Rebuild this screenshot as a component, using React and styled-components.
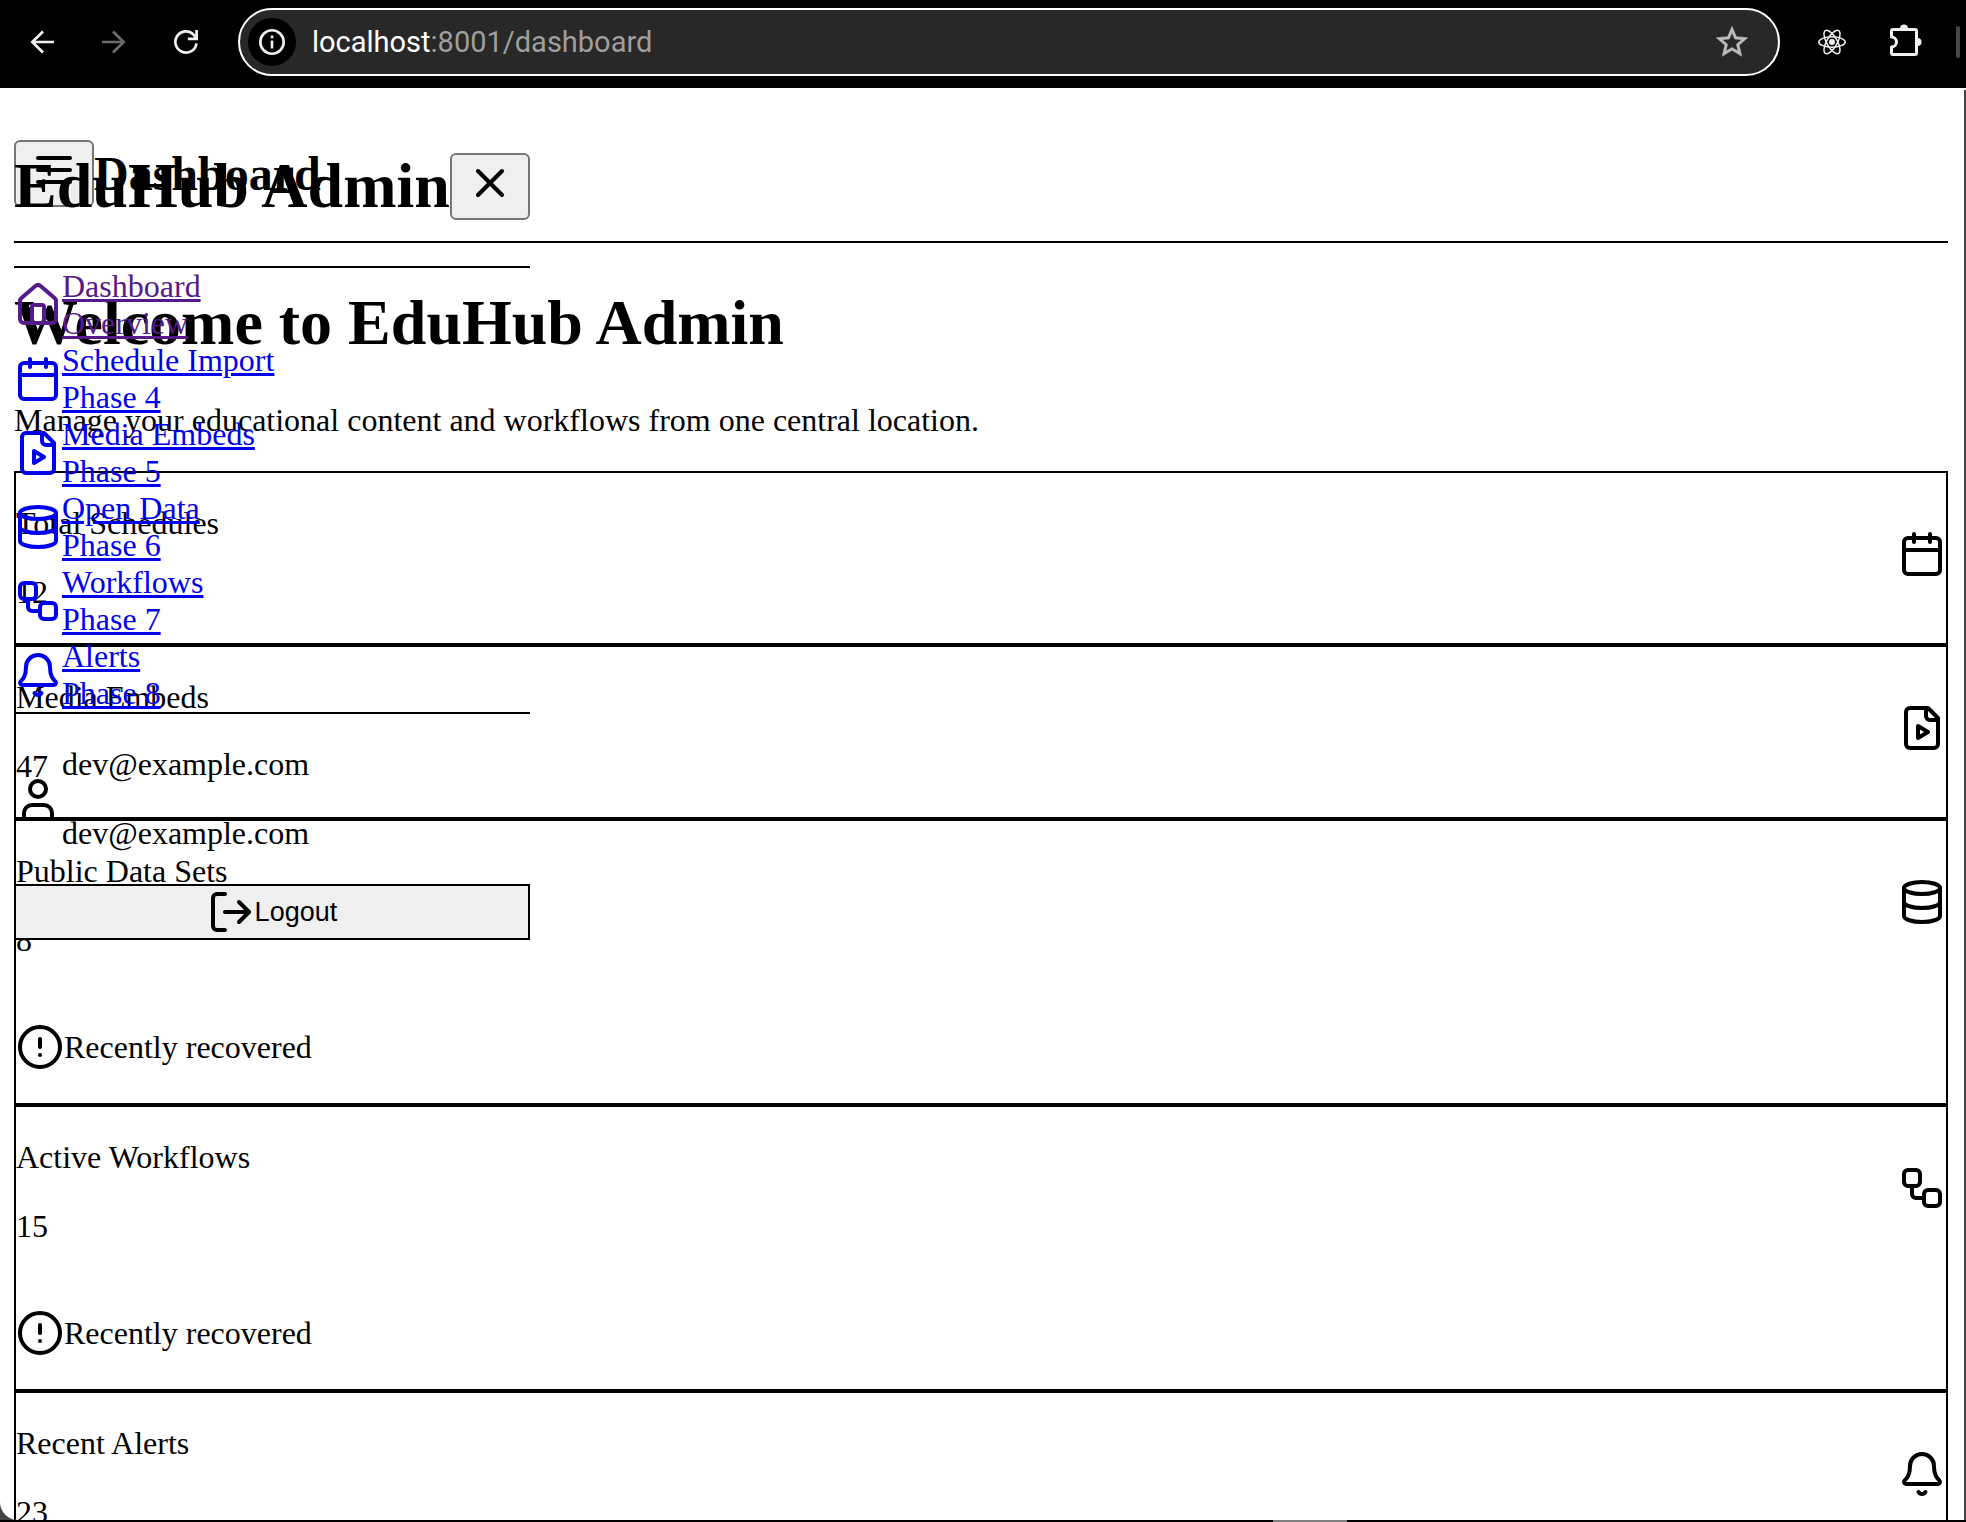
import React from "react";
import styled, { createGlobalStyle } from "styled-components";
import { House, Calendar, Database, Workflow, Bell, X, User, LogOut, CircleAlert } from "lucide-react";

const serif = `"Liberation Serif", "Times New Roman", serif`;
const sans = `"Liberation Sans", Arial, sans-serif`;
const ui = `Roboto, "Liberation Sans", sans-serif`;

const GlobalStyle = createGlobalStyle`
  * { box-sizing: border-box; }
  body {
    margin: 0;
    background: #000;
    color: #000;
    font-family: ${serif};
    font-size: 32px;
    line-height: 37px;
    text-rendering: optimizeLegibility;
  }
`;

const Window = styled.div`
  position: relative;
  display: flex;
  flex-direction: column;
  height: 100vh;
  overflow: hidden;
`;

/* Browser toolbar */

const Toolbar = styled.header`
  display: flex;
  align-items: center;
  flex: none;
  height: 88px;
  padding: 0 6px 4px 18px;
  gap: 24px;
  background: #000;
`;

const ToolButton = styled.button`
  display: flex;
  align-items: center;
  justify-content: center;
  flex: none;
  width: 48px;
  height: 48px;
  padding: 0;
  border: 0;
  border-radius: 24px;
  background: ${(p) => p.$fill || "transparent"};
  color: ${(p) => p.$color || "#f1f1f1"};
`;

const AddressBar = styled.div`
  display: flex;
  align-items: center;
  flex: 1;
  height: 68px;
  margin-left: 4px;
  padding: 0 22px 0 8px;
  border: 2px solid #fff;
  border-radius: 34px;
  background: #282828;
`;

const Address = styled.p`
  flex: 1;
  margin: 0 0 0 16px;
  font: 29px/36px ${ui};
  color: #9f9f9f;
`;

const Host = styled.span`
  color: #fff;
`;

const Extensions = styled.div`
  display: flex;
  align-items: center;
  gap: 24px;
  margin-left: 4px;
`;

const Separator = styled.span`
  width: 4px;
  height: 32px;
  margin-left: 4px;
  border-radius: 2px;
  background: #474747;
`;

/* Page */

const Frame = styled.div`
  flex: 1;
  min-height: 0;
  background: linear-gradient(#fff 2px, #444 2px);
  padding-right: 2px;
  margin-bottom: 2px;
`;

const Viewport = styled.div`
  position: relative;
  height: 100%;
  overflow: hidden;
  padding: 18px 16px 0 14px;
  border-bottom-left-radius: 18px;
  background: #fff;
`;

const PageHeader = styled.div`
  display: flex;
  align-items: center;
  border-bottom: 2px solid #000;
`;

const PageName = styled.h2`
  margin: 40px 0;
  font-size: 48px;
  line-height: 55px;
`;

const Title = styled.h1`
  margin: 43px 0;
  font-size: 64px;
  line-height: 73px;
`;

const BrandName = styled(Title)`
  line-height: 74px;
`;

const Text = styled.p`
  margin: 32px 0;
`;

const Intro = styled(Text)`
  margin-top: 0;
`;

const IconButton = styled.button`
  flex: none;
  height: 67px;
  padding: 4px 14px 11px;
  border: 2px solid #767676;
  border-radius: 6px;
  background: #efefef;
  color: #000;
  line-height: 0;
`;

const Card = styled.section`
  border: 2px solid #000;
`;

const CardRow = styled.div`
  display: flex;
  align-items: center;
  justify-content: space-between;
`;

/* Holds the two text margins open so that they count in the row's height. */
const CardText = styled.div`
  display: flow-root;
`;

const CardIcon = styled.div`
  height: 56px;
  line-height: 0;
`;

const Notice = styled.div`
  display: flex;
  align-items: center;
  margin: 32px 0;
`;

/* Sidebar, drawn over the page */

const Sidebar = styled.aside`
  position: absolute;
  top: 18px;
  left: 14px;
  width: max-content;
`;

const Brand = styled.div`
  display: flex;
  align-items: center;
  border-bottom: 2px solid #000;
`;

const Nav = styled.nav`
  display: flex;
  flex-direction: column;
`;

const NavLink = styled.a`
  display: flex;
  align-items: center;
  color: ${(p) => (p.$visited ? "#551a8b" : "#0000ee")};
  text-decoration-thickness: 3px;
`;

const Account = styled.div`
  border-top: 2px solid #000;
`;

const Profile = styled.div`
  display: flex;
  align-items: center;
`;

const LogoutButton = styled.button`
  display: flex;
  align-items: center;
  justify-content: center;
  width: 100%;
  height: 56px;
  padding: 0;
  border: 2px solid #000;
  background: #efefef;
  color: #000;
  font: 27px/31px ${sans};
`;

const BottomHandle = styled.div`
  position: absolute;
  bottom: 0;
  left: 1273px;
  width: 74px;
  height: 2px;
  background: #808080;
`;

const Glyph = ({ size = 48, children }) => (
  <svg width={size} height={size} viewBox="0 0 24 24" fill="none" stroke="currentColor"
    strokeWidth="2" strokeLinecap="round" strokeLinejoin="round" aria-hidden="true">
    {children}
  </svg>
);

const MenuIcon = () => (
  <Glyph>
    <path d="M4 6h16M4 12h16M4 18h16" />
  </Glyph>
);

const FileVideo = () => (
  <Glyph>
    <path d="M15 2H6a2 2 0 0 0-2 2v16a2 2 0 0 0 2 2h12a2 2 0 0 0 2-2V7Z" />
    <path d="M14 2v4a2 2 0 0 0 2 2h4" />
    <path d="m10 11 5 3-5 3v-6Z" />
  </Glyph>
);

const ToolGlyph = ({ children }) => (
  <svg width="32" height="32" viewBox="0 0 32 32" fill="none" stroke="currentColor" strokeWidth="2.7" aria-hidden="true">
    {children}
  </svg>
);

const BackIcon = () => (
  <ToolGlyph>
    <path d="M28 16H6M17 5.500 6.300 16 17 26.500" />
  </ToolGlyph>
);

const ForwardIcon = () => (
  <ToolGlyph>
    <path d="M4 16h22M15 5.500 25.700 16 15 26.500" />
  </ToolGlyph>
);

const ReloadIcon = () => (
  <ToolGlyph>
    <path d="M26.500 17.300A10.600 10.600 0 1 1 23.800 8.800L26 12" />
    <path d="M26.600 4v8.800h-8.800" />
  </ToolGlyph>
);

const InfoIcon = () => (
  <svg width="28" height="28" viewBox="0 0 28 28" fill="none" stroke="currentColor" aria-hidden="true">
    <circle cx="14" cy="14" r="11.700" strokeWidth="2.600" />
    <path d="M14 12.500v8M14 7.500v2.800" strokeWidth="2.600" />
  </svg>
);

const StarIcon = () => (
  <svg width="38" height="38" viewBox="0 0 24 24" fill="currentColor" stroke="currentColor" strokeWidth="0.3" aria-hidden="true">
    <path d="m22 9.240-7.190-.620L12 2 9.190 8.630 2 9.240l5.460 4.730L5.820 21 12 17.270 18.180 21l-1.630-7.030L22 9.240zM12 15.400l-3.760 2.270 1-4.280-3.320-2.880 4.380-.380L12 6.100l1.710 4.040 4.380.380-3.320 2.880 1 4.280L12 15.400z" />
  </svg>
);

const ReactIcon = () => (
  <svg width="30" height="30" viewBox="-15 -15 30 30" fill="none" stroke="currentColor" strokeWidth="1.500" aria-hidden="true">
    <circle r="3" fill="currentColor" stroke="none" />
    <ellipse rx="13.200" ry="5.200" />
    <ellipse rx="13.200" ry="5.200" transform="rotate(60)" />
    <ellipse rx="13.200" ry="5.200" transform="rotate(120)" />
  </svg>
);

const PuzzleIcon = () => (
  <svg width="36" height="36" viewBox="0 0 36 36" aria-hidden="true">
    <path d="M7 5.500h22a1.500 1.500 0 0 1 1.500 1.500v22a1.500 1.500 0 0 1-1.500 1.500H7A1.500 1.500 0 0 1 5.500 29v-6a5 5 0 0 0 0-10V7A1.500 1.500 0 0 1 7 5.500z"
      fill="none" stroke="currentColor" strokeWidth="3" strokeLinejoin="round" />
    <path d="M14 4.500a4 4 0 0 1 8 0zM31.500 14a4 4 0 0 1 0 8z" fill="currentColor" />
  </svg>
);

const links = [
  { title: "Dashboard", note: "Overview", Icon: House, visited: true },
  { title: "Schedule Import", note: "Phase 4", Icon: Calendar },
  { title: "Media Embeds", note: "Phase 5", Icon: FileVideo },
  { title: "Open Data", note: "Phase 6", Icon: Database },
  { title: "Workflows", note: "Phase 7", Icon: Workflow },
  { title: "Alerts", note: "Phase 8", Icon: Bell },
];

const stats = [
  { label: "Total Schedules", value: 12, Icon: Calendar },
  { label: "Media Embeds", value: 47, Icon: FileVideo },
  { label: "Public Data Sets", value: 8, Icon: Database, recovered: true },
  { label: "Active Workflows", value: 15, Icon: Workflow, recovered: true },
  { label: "Recent Alerts", value: 23, Icon: Bell },
];

export default function App() {
  return (
    <Window>
      <GlobalStyle />
      <Toolbar>
        <ToolButton aria-label="Back"><BackIcon /></ToolButton>
        <ToolButton aria-label="Forward" $color="#6b6b6b"><ForwardIcon /></ToolButton>
        <ToolButton aria-label="Reload"><ReloadIcon /></ToolButton>
        <AddressBar>
          <ToolButton aria-label="Site information" $fill="#000"><InfoIcon /></ToolButton>
          <Address><Host>localhost</Host>:8001/dashboard</Address>
          <ToolButton aria-label="Bookmark" $color="#bdbdbd"><StarIcon /></ToolButton>
        </AddressBar>
        <Extensions>
          <ToolButton aria-label="React tools"><ReactIcon /></ToolButton>
          <ToolButton aria-label="Extensions"><PuzzleIcon /></ToolButton>
          <Separator />
        </Extensions>
      </Toolbar>
      <Frame>
        <Viewport>
          <PageHeader>
            <IconButton aria-label="Open menu"><MenuIcon /></IconButton>
            <PageName>Dashboard</PageName>
          </PageHeader>
          <main>
            <Title>Welcome to EduHub Admin</Title>
            <Intro>Manage your educational content and workflows from one central location.</Intro>
            {stats.map(({ label, value, Icon, recovered }) => (
              <Card key={label}>
                <CardRow>
                  <CardText>
                    <Text>{label}</Text>
                    <Text>{value}</Text>
                  </CardText>
                  <CardIcon><Icon size={48} /></CardIcon>
                </CardRow>
                {recovered && (
                  <Notice>
                    <CircleAlert size={48} />
                    <span>Recently recovered</span>
                  </Notice>
                )}
              </Card>
            ))}
          </main>
          <Sidebar>
            <Brand>
              <BrandName>EduHub Admin</BrandName>
              <IconButton aria-label="Close menu"><X size={48} /></IconButton>
            </Brand>
            <Nav>
              {links.map(({ title, note, Icon, visited }) => (
                <NavLink key={title} href="#" $visited={visited}>
                  <Icon size={48} />
                  <div>
                    <div>{title}</div>
                    <div>{note}</div>
                  </div>
                </NavLink>
              ))}
            </Nav>
            <Account>
              <Profile>
                <User size={48} />
                <CardText>
                  <Text>dev@example.com</Text>
                  <Text>dev@example.com</Text>
                </CardText>
              </Profile>
              <LogoutButton><LogOut size={48} />Logout</LogoutButton>
            </Account>
          </Sidebar>
        </Viewport>
      </Frame>
      <BottomHandle />
    </Window>
  );
}
